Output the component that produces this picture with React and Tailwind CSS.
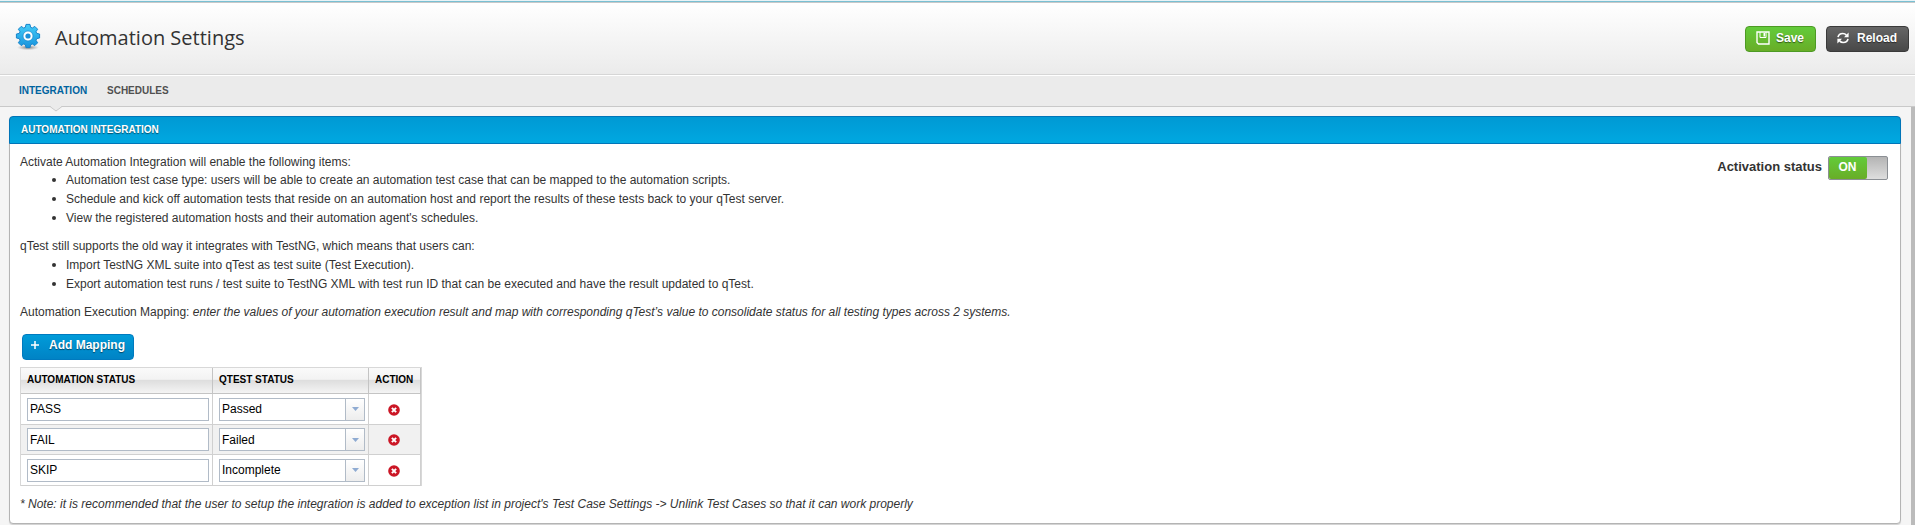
const T = 'whitespace-pre';

function Gear() {
  return (
    <svg className="block h-[28px] w-[26px] shrink-0" viewBox="0 0 26 28">
      <defs>
        <linearGradient id="gear" x1="0" y1="0" x2="0" y2="1">
          <stop offset="0" stopColor="#45cdf8" />
          <stop offset="1" stopColor="#1793dc" />
        </linearGradient>
        <radialGradient id="shade">
          <stop offset="0" stopColor="#666" stopOpacity="0.9" />
          <stop offset="1" stopColor="#999" stopOpacity="0" />
        </radialGradient>
      </defs>
      <ellipse cx="13" cy="24.500" rx="11" ry="2.800" fill="url(#shade)" />
      <path
        d="M11 1.400h4l.6 2.900 1.700.7 2.500-1.600 2.800 2.800-1.600 2.500.7 1.700 2.900.6v4l-2.900.6-.7 1.700 1.600 2.500-2.800 2.800-2.500-1.600-1.700.7-.6 2.900h-4l-.6-2.900-1.700-.7-2.500 1.600-2.800-2.800 1.600-2.500-.7-1.700-2.900-.6v-4l2.900-.6.7-1.700L3.400 6.200l2.800-2.800L8.700 5l1.700-.7z"
        fill="url(#gear)"
        stroke="#1684cc"
        strokeWidth="1"
        strokeLinejoin="round"
      />
      <circle cx="13" cy="13" r="5" fill="#fff" stroke="#1684cc" strokeWidth="0.700" />
      <circle cx="13" cy="13" r="2.600" fill="#1b8fd8" />
    </svg>
  );
}

function SaveIcon() {
  return (
    <svg className="block size-[14px]" viewBox="0 0 14 14" fill="none" stroke="#fff" strokeWidth="1.400">
      <path d="M1 1h12v12H2.500L1 11.500z" />
      <path d="M4 1v5.500h6V1" strokeWidth="1" />
      <path d="M7.500 2h1.500v3.500H7.500z" fill="#fff" stroke="none" />
    </svg>
  );
}

function ReloadIcon() {
  return (
    <svg className="block h-[12px] w-[12px]" viewBox="0 0 12 12" fill="none" stroke="#fff" strokeWidth="1.600">
      <path d="M1 5.200C1.500 2.800 3.500 1.500 5.800 1.500c1.500 0 2.700.6 3.600 1.600" />
      <path d="M11 6.800c-.5 2.400-2.500 3.700-4.800 3.700-1.500 0-2.700-.6-3.600-1.600" />
      <path d="M11.600.6v4.600H7z" fill="#fff" stroke="none" />
      <path d="M.4 11.400V6.800H5z" fill="#fff" stroke="none" />
    </svg>
  );
}

function RemoveIcon() {
  return (
    <svg className="block size-[12px]" viewBox="0 0 12 12">
      <circle cx="6" cy="6" r="5.800" fill="#cb1625" />
      <path d="M3.900 3.900l4.200 4.200M8.100 3.900L3.900 8.100" stroke="#fff" strokeWidth="2" />
    </svg>
  );
}

function Bullet({ children }) {
  return (
    <li className="flex h-[19px] items-center">
      <span className="mr-[10px] size-[4px] rounded-full bg-[#333]" />
      <span className={T}>{children}</span>
    </li>
  );
}

function Row({ name, status, cls }) {
  return (
    <div className={'flex border-b border-[#d0d0d0] ' + cls}>
      <div className="flex w-[192px] items-center border-r border-[#d0d0d0] pl-[6px]">
        <div className="flex h-[23px] w-[182px] items-center border border-[#b1bbc7] bg-white pl-[2px]">{name}</div>
      </div>
      <div className="flex w-[156px] items-center border-r border-[#d0d0d0] pl-[6px]">
        <div className="flex h-[23px] w-[146px] border border-[#b1bbc7] bg-white">
          <div className="flex flex-1 items-center pl-[2px]">{status}</div>
          <div className="flex w-[19px] items-center justify-center border-l border-[#b1bbc7] bg-linear-to-b from-white to-[#ededed]">
            <svg className="block h-[4px] w-[7px]" viewBox="0 0 7 4"><path d="M0 0h7L3.500 4z" fill="#8fabd2" /></svg>
          </div>
        </div>
      </div>
      <div className="flex flex-1 items-center justify-center border-r border-[#d0d0d0] pt-px pr-px"><RemoveIcon /></div>
    </div>
  );
}

export default function App() {
  return (
    <div className="h-[525px] w-[1915px] overflow-hidden bg-[#f5f5f5] font-['Liberation_Sans',Arial,sans-serif] text-[12px] leading-[14px] text-[#333]">
      <div className="h-[3px] border-b border-[#c9c9c9] bg-[#e9f3f6]"><div className="h-px" /><div className="h-px bg-[#79c0d3]" /></div>
      <header className="flex h-[72px] items-center border-b border-[#d6d6d6] bg-linear-to-b from-white to-[#ebebeb] pl-[15px] pr-[6px]">
        <div className="-mt-[4px]"><Gear /></div>
        <h1 className="-mt-px ml-[14px] flex-1 font-['Open_Sans',sans-serif] text-[20px] leading-[28px] text-[#333]">Automation Settings</h1>
        <button className="mr-[10px] flex h-[26px] w-[71px] items-center rounded-[4px] border border-[#4d9a24] bg-linear-to-b from-[#62cb3a] to-[#68ad27] pb-[2px] pl-[10px] font-bold text-white text-shadow-[0_1px_1px_rgb(0_0_0/0.5)]">
          <SaveIcon /><span className="ml-[6px]">Save</span>
        </button>
        <button className="flex h-[26px] w-[83px] items-center rounded-[4px] border border-[#3a3a3a] bg-linear-to-b from-[#666] to-[#484848] pb-[2px] pl-[10px] font-bold text-white text-shadow-[0_1px_1px_rgb(0_0_0/0.5)]">
          <ReloadIcon /><span className="ml-[8px]">Reload</span>
        </button>
      </header>
      <nav className="relative flex h-[32px] items-center border-t border-b border-t-white border-b-[#c9c9c9] bg-[#ebebeb] pl-[19px] text-[10px] font-bold">
        <span className="w-[88px] text-[#00639f]">INTEGRATION</span>
        <span className="text-[#505050]">SCHEDULES</span>
        <svg className="absolute left-[50px] top-[29px] h-[7px] w-[12px]" viewBox="0 0 12 7"><path d="M0 0h12v1L6 6 0 1z" fill="#ebebeb" /><path d="M0 1.500L6 6l6-4.500" fill="none" stroke="#c9c9c9" /></svg>
      </nav>
      <div className="flex h-[418px] justify-between pl-[9px]">
        <main className="mt-[9px] h-[408px] w-[1892px] rounded-[4px] border border-[#b4b4b4] bg-white shadow-[0_1px_1px_rgb(0_0_0/0.15)]">
          <div className="-mx-px -mt-px flex h-[28px] items-center rounded-t-[4px] border border-[#0075b8] bg-linear-to-b from-[#0099d4] to-[#00a8e1] pl-[11px] text-[10px] font-bold text-white text-shadow-[0_1px_1px_rgb(0_0_0/0.5)]">AUTOMATION INTEGRATION</div>
          <div className="flex justify-between pl-[10px] pr-[12px]">
            <div className="pt-[11px]">
              <p className="h-[15px] leading-[14px]">Activate Automation Integration will enable the following items:</p>
              <ul className="pl-[32px]">
                <Bullet>Automation test case type: users will be able to create an automation test case that can be mapped to the automation scripts.</Bullet>
                <Bullet>Schedule and kick off automation tests that reside on an automation host and report the results of these tests back to your qTest server.</Bullet>
                <Bullet>View the registered automation hosts and their automation agent's schedules.</Bullet>
              </ul>
              <p className="mt-[12px] h-[16px] leading-[14px]">qTest still supports the old way it integrates with TestNG, which means that users can:</p>
              <ul className="pl-[32px]">
                <Bullet>Import TestNG XML suite into qTest as test suite (Test Execution).</Bullet>
                <Bullet>Export automation test runs / test suite to TestNG XML with test run ID that can be executed and have the result updated to qTest.</Bullet>
              </ul>
              <p className="mt-[12px] h-[29px]">Automation Execution Mapping: <i>enter the values of your automation execution result and map with corresponding qTest’s value to consolidate status for all testing types across 2 systems.</i></p>
              <button className="ml-[2px] flex h-[26px] w-[112px] items-center rounded-[4px] border border-[#007abf] bg-linear-to-b from-[#009bd9] to-[#0083c5] pb-[4px] pl-[8px] font-bold text-white text-shadow-[0_1px_1px_rgb(0_0_0/0.5)]">
                <svg className="block size-[8px]" viewBox="0 0 8 8"><path d="M4 0v8M0 4h8" stroke="#fff" strokeWidth="1.500" /></svg>
                <span className="ml-[10px]">Add Mapping</span>
              </button>
              <div className="mt-[7px] w-[402px] border border-b-0 border-[#d8d8d8] bg-white text-black">
                <div className="flex h-[26px] border-b border-[#c4c4c4] bg-[linear-gradient(#fafafa_0%,#f3f3f3_45%,#dedede_50%,#f4f4f4_100%)] text-[10px] font-bold">
                  <span className="flex w-[192px] items-center border-r border-[#c4c4c4] pl-[6px] pb-px">AUTOMATION STATUS</span>
                  <span className="flex w-[156px] items-center border-r border-[#c4c4c4] pl-[6px] pb-px">QTEST STATUS</span>
                  <span className="flex flex-1 items-center border-r border-[#c4c4c4] pl-[6px] pb-px">ACTION</span>
                </div>
                <Row name="PASS" status="Passed" cls="h-[31px]" />
                <Row name="FAIL" status="Failed" cls="h-[30px] bg-[#f1f1f1]" />
                <Row name="SKIP" status="Incomplete" cls="h-[31px]" />
              </div>
              <p className="mt-[11px] italic">* Note: it is recommended that the user to setup the integration is added to exception list in project's Test Case Settings -&gt; Unlink Test Cases so that it can work properly</p>
            </div>
            <div className="mt-[12px] flex h-[24px] items-center gap-[6px]">
              <span className="pb-[3px] text-[13px] font-bold">Activation status</span>
              <div className="flex h-[24px] w-[60px] rounded-[2px] border border-[#8b8f94] bg-linear-to-b from-[#b4b4b4] to-[#dedede]">
                <span className="flex w-[38px] items-center justify-center rounded-[2px] bg-linear-to-b from-[#62cb3a] to-[#68ad27] pr-px pb-[2px] font-bold text-white">ON</span>
              </div>
            </div>
          </div>
        </main>
        <div className="w-[4px] bg-[#bbb]" />
      </div>
    </div>
  );
}
